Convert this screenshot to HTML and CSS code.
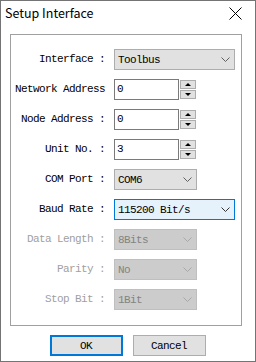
FILE: index.html
```html
<!DOCTYPE html>
<html lang="en">
<head>
    <meta charset="UTF-8">
    <title>Setup Interface</title>
    <link rel="stylesheet" href="styles.css">
</head>
<body>

<div class="window">
    <div class="titlebar">
        <span class="title">Setup Interface</span>
        <svg class="close" width="13" height="13" viewBox="0 0 13 13">
            <path d="M0.5 0.5 L12.5 12.5 M12.5 0.5 L0.5 12.5" stroke="#000" stroke-width="1" fill="none"/>
        </svg>
    </div>

    <div class="group">
        <div class="form">
            <label class="lbl">Interface :</label>
            <div class="combo wide"><span>Toolbus</span><svg class="chev" width="9" height="5" viewBox="0 0 9 5"><path d="M0.5 0.5 L4.5 4.5 L8.5 0.5" fill="none" stroke="currentColor"/></svg></div>

            <label class="lbl">Network Address</label>
            <div class="spin">
                <div class="edit">0</div>
                <div class="spin-btns">
                    <div class="sbtn"><span class="up"></span></div>
                    <div class="sbtn"><span class="down"></span></div>
                </div>
            </div>

            <label class="lbl">Node Address :</label>
            <div class="spin">
                <div class="edit">0</div>
                <div class="spin-btns">
                    <div class="sbtn"><span class="up"></span></div>
                    <div class="sbtn"><span class="down"></span></div>
                </div>
            </div>

            <label class="lbl">Unit No. :</label>
            <div class="spin">
                <div class="edit">3</div>
                <div class="spin-btns">
                    <div class="sbtn"><span class="up"></span></div>
                    <div class="sbtn"><span class="down"></span></div>
                </div>
            </div>

            <label class="lbl">COM Port :</label>
            <div class="combo"><span>COM6</span><svg class="chev" width="9" height="5" viewBox="0 0 9 5"><path d="M0.5 0.5 L4.5 4.5 L8.5 0.5" fill="none" stroke="currentColor"/></svg></div>

            <label class="lbl">Baud Rate :</label>
            <div class="combo wide focus"><span>115200 Bit/s</span><svg class="chev" width="9" height="5" viewBox="0 0 9 5"><path d="M0.5 0.5 L4.5 4.5 L8.5 0.5" fill="none" stroke="currentColor"/></svg></div>

            <label class="lbl off">Data Length :</label>
            <div class="combo disabled"><span>8Bits</span><svg class="chev" width="9" height="5" viewBox="0 0 9 5"><path d="M0.5 0.5 L4.5 4.5 L8.5 0.5" fill="none" stroke="currentColor"/></svg></div>

            <label class="lbl off">Parity :</label>
            <div class="combo disabled"><span>No</span><svg class="chev" width="9" height="5" viewBox="0 0 9 5"><path d="M0.5 0.5 L4.5 4.5 L8.5 0.5" fill="none" stroke="currentColor"/></svg></div>

            <label class="lbl off">Stop Bit :</label>
            <div class="combo disabled"><span>1Bit</span><svg class="chev" width="9" height="5" viewBox="0 0 9 5"><path d="M0.5 0.5 L4.5 4.5 L8.5 0.5" fill="none" stroke="currentColor"/></svg></div>
        </div>
    </div>

    <div class="buttons">
        <button class="btn default">OK</button>
        <button class="btn">Cancel</button>
    </div>
</div>

</body>
</html>
```

FILE: styles.css
```css
/* Dialog window */
body {
    margin: 0;
    padding: 0;
    background-color: #ffffff;
}

.window {
    width: 256px;
    height: 362px;
    box-sizing: border-box;
    border: 1px solid #747474;
    background-color: #ffffff;
    display: flex;
    flex-direction: column;
    font-family: "Liberation Mono", "DejaVu Sans Mono", monospace;
    font-size: 11px;
    letter-spacing: -0.6px;
    color: #000000;
}

.titlebar {
    height: 33px;
    display: flex;
    justify-content: space-between;
    align-items: flex-start;
    padding: 0 13px 0 4px;
    box-sizing: border-box;
}

.title {
    font-family: "Noto Sans CJK SC", "Noto Sans", sans-serif;
    font-size: 12.5px;
    letter-spacing: 0;
    line-height: 18px;
    margin-top: 3px;
}

.close {
    margin-top: 6px;
}

/* Group box */
.group {
    margin-left: 9px;
    width: 232px;
    height: 292px;
    box-sizing: border-box;
    border: 1px solid #a0a0a0;
    padding-top: 14px;
}

.form {
    display: grid;
    grid-template-columns: 94px auto;
    grid-auto-rows: 21px;
    column-gap: 9px;
    row-gap: 9px;
    align-items: center;
}

.lbl {
    text-align: right;
    white-space: nowrap;
    line-height: 21px;
}

.lbl.off {
    color: #a0a0a0;
}

/* Combo boxes */
.combo {
    width: 83px;
    height: 21px;
    box-sizing: border-box;
    border: 1px solid #adadad;
    background-color: #e1e1e1;
    display: flex;
    align-items: center;
    justify-content: space-between;
    padding: 0 4px 0 3px;
    color: #000000;
}

.combo .chev {
    color: #606060;
}

.combo.wide {
    width: 121px;
}

.combo.focus {
    border-color: #0078d7;
    background-color: #e5f1fb;
}

.combo.focus .chev {
    color: #333333;
}

.combo.disabled {
    background-color: #cccccc;
    border-color: #bfbfbf;
    color: #838383;
}

.combo.disabled .chev {
    color: #a8a8a8;
}

/* Spin edits */
.spin {
    display: flex;
    gap: 1px;
    height: 21px;
}

.edit {
    width: 65px;
    height: 21px;
    box-sizing: border-box;
    border: 1px solid #7a7a7a;
    background-color: #ffffff;
    padding-left: 2px;
    line-height: 19px;
}

.spin-btns {
    display: flex;
    flex-direction: column;
    gap: 1px;
    padding-top: 1px;
}

.sbtn {
    width: 16px;
    height: 9px;
    box-sizing: border-box;
    border: 1px solid #adadad;
    background-color: #e1e1e1;
    display: flex;
    align-items: center;
    justify-content: center;
}

.up {
    width: 0;
    height: 0;
    border-left: 3px solid transparent;
    border-right: 3px solid transparent;
    border-bottom: 3px solid #000000;
}

.down {
    width: 0;
    height: 0;
    border-left: 3px solid transparent;
    border-right: 3px solid transparent;
    border-top: 3px solid #000000;
}

/* Bottom buttons */
.buttons {
    display: flex;
    justify-content: center;
    gap: 10px;
    margin-top: 9px;
    padding-right: 1px;
}

.btn {
    width: 73px;
    height: 21px;
    box-sizing: border-box;
    border: 1px solid #adadad;
    background-color: #e1e1e1;
    font-family: "Liberation Mono", "DejaVu Sans Mono", monospace;
    font-size: 11px;
    letter-spacing: -0.6px;
    color: #000000;
    padding: 0;
}

.btn.default {
    border: 2px solid #0078d7;
}
```
